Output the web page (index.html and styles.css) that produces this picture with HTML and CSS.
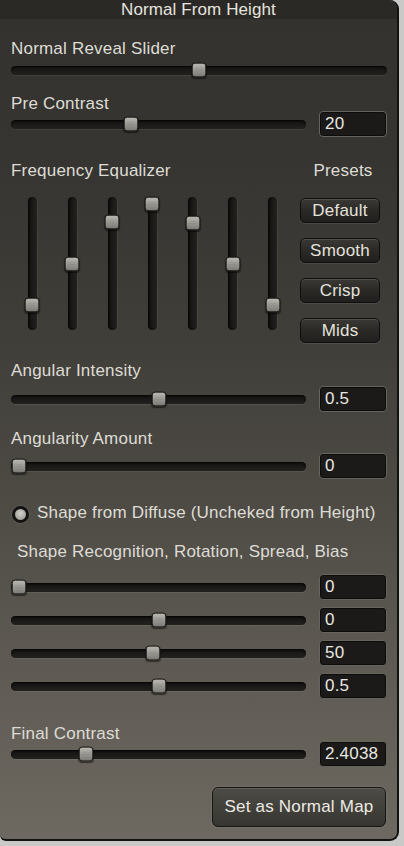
FILE: index.html
```html
<!DOCTYPE html>
<html>
<head>
<meta charset="utf-8">
<link rel="stylesheet" href="styles.css">
</head>
<body>
<div class="panel">
  <div class="title">Normal From Height</div>
  <div class="content">
    <div class="label l1">Normal Reveal Slider</div>
    <div class="row r1">
      <div class="track"><div class="rail"><span class="thumb" style="left:50%"></span></div></div>
    </div>

    <div class="label l2">Pre Contrast</div>
    <div class="row">
      <div class="track"><div class="rail"><span class="thumb" style="left:40%"></span></div></div>
      <div class="value">20</div>
    </div>

    <div class="eq-head"><span class="label">Frequency Equalizer</span><span class="label presets-title">Presets</span></div>
    <div class="eq">
      <div class="bands">
        <div class="band"><div class="vtrack"><div class="vrail"><span class="vthumb" style="top:85%"></span></div></div></div>
        <div class="band"><div class="vtrack"><div class="vrail"><span class="vthumb" style="top:50%"></span></div></div></div>
        <div class="band"><div class="vtrack"><div class="vrail"><span class="vthumb" style="top:15%"></span></div></div></div>
        <div class="band"><div class="vtrack"><div class="vrail"><span class="vthumb" style="top:0%"></span></div></div></div>
        <div class="band"><div class="vtrack"><div class="vrail"><span class="vthumb" style="top:16%"></span></div></div></div>
        <div class="band"><div class="vtrack"><div class="vrail"><span class="vthumb" style="top:50%"></span></div></div></div>
        <div class="band"><div class="vtrack"><div class="vrail"><span class="vthumb" style="top:85%"></span></div></div></div>
      </div>
      <div class="presets">
        <div class="preset">Default</div>
        <div class="preset">Smooth</div>
        <div class="preset">Crisp</div>
        <div class="preset">Mids</div>
      </div>
    </div>

    <div class="label l4">Angular Intensity</div>
    <div class="row r4">
      <div class="track"><div class="rail"><span class="thumb" style="left:50%"></span></div></div>
      <div class="value">0.5</div>
    </div>

    <div class="label l5">Angularity Amount</div>
    <div class="row r5">
      <div class="track"><div class="rail"><span class="thumb" style="left:0%"></span></div></div>
      <div class="value">0</div>
    </div>

    <div class="radio-row">
      <span class="radio"></span>
      <span class="label">Shape from Diffuse (Uncheked from Height)</span>
    </div>

    <div class="label l6">Shape Recognition, Rotation, Spread, Bias</div>
    <div class="row r6">
      <div class="track"><div class="rail"><span class="thumb" style="left:0%"></span></div></div>
      <div class="value">0</div>
    </div>
    <div class="row r7">
      <div class="track"><div class="rail"><span class="thumb" style="left:50%"></span></div></div>
      <div class="value">0</div>
    </div>
    <div class="row r7">
      <div class="track"><div class="rail"><span class="thumb" style="left:48%"></span></div></div>
      <div class="value">50</div>
    </div>
    <div class="row r7">
      <div class="track"><div class="rail"><span class="thumb" style="left:50%"></span></div></div>
      <div class="value">0.5</div>
    </div>

    <div class="label l7">Final Contrast</div>
    <div class="row">
      <div class="track"><div class="rail"><span class="thumb" style="left:24%"></span></div></div>
      <div class="value">2.4038</div>
    </div>

    <div class="action-row"><div class="action">Set as Normal Map</div></div>
  </div>
</div>
</body>
</html>
```
FILE: styles.css
```css
html, body {
  margin: 0;
  padding: 0;
  background: #c9c9c7;
}
body {
  width: 404px;
  height: 846px;
  overflow: hidden;
  font-family: "Liberation Sans", Arial, sans-serif;
}
.panel {
  width: 397px;
  height: 839px;
  border-right: 2px solid #121210;
  border-bottom: 2px solid #121210;
  border-radius: 0 9px 9px 6px;
  background: linear-gradient(#33322e 0%, #363531 20%, #403e39 40%, #4e4b45 60%, #5f5b54 80%, #6d6860 100%);
  overflow: hidden;
}
.title {
  height: 19px;
  line-height: 19px;
  font-size: 17px;
  text-align: center;
  color: #e6e4de;
  background: #2a2926;
  letter-spacing: 0.1px;
}
.content {
  padding: 0 10px 0 11px;
  display: flex;
  flex-direction: column;
}
.label {
  font-size: 17px;
  line-height: 16px;
  height: 16px;
  color: #dedcd5;
  letter-spacing: 0.2px;
  white-space: nowrap;
}
.l1 { margin-top: 22px; }
.r1 { margin-top: 1px; }
.l2 { margin-top: 14px; }
.l4 { margin-top: 20px; }
.r4 { margin-top: 8px; }
.l5 { margin-top: 20px; }
.r5 { margin-top: 7px; }
.l6 { margin-top: 23px; padding-left: 6px; }
.r6 { margin-top: 15px; }
.r7 { margin-top: 9px; }
.l7 { margin-top: 28px; }

.row {
  display: flex;
  align-items: center;
  height: 24px;
}
.track {
  flex: 1;
  height: 9px;
  position: relative;
  border-radius: 5px;
  background: linear-gradient(#121110, #23221f);
  box-shadow: inset 0 1px 2px rgba(0,0,0,0.8), 0 1px 0 rgba(255,255,255,0.07);
}
.rail {
  position: absolute;
  left: 7.5px;
  right: 7.5px;
  top: 0;
  bottom: 0;
}
.thumb, .vthumb {
  position: absolute;
  width: 13px;
  height: 13px;
  border: 1px solid #1c1b19;
  border-radius: 4px;
  background: linear-gradient(#b9b9b2 0%, #9c9b95 45%, #7b7a74 100%);
  box-shadow: 0 1px 1px rgba(0,0,0,0.5);
}
.thumb {
  top: 50%;
  transform: translate(-50%, -50%);
}
.thumb::after, .vthumb::after {
  content: "";
  position: absolute;
  left: 3px;
  right: 3px;
  top: 5px;
  height: 3px;
  background: repeating-linear-gradient(#8a8983 0 1px, transparent 1px 2px);
  opacity: 0.7;
}
.value {
  width: 68px;
  height: 26px;
  flex: none;
  box-sizing: border-box;
  margin-left: 13px;
  border: 1px solid #66645d;
  border-radius: 4px;
  background: #1b1a18;
  box-shadow: inset 0 0 0 1px #0c0c0b;
  color: #e8e6e0;
  font-size: 17px;
  line-height: 24px;
  padding-left: 5px;
  letter-spacing: 0.2px;
}

.eq-head {
  margin-top: 27px;
  display: flex;
  justify-content: space-between;
}
.presets-title {
  width: 80px;
  text-align: center;
  margin-right: 4px;
}
.eq {
  margin-top: 18px;
  height: 146px;
  display: flex;
}
.bands {
  display: flex;
  margin-left: 1px;
  width: 281px;
}
.band {
  width: 40.2px;
  display: flex;
  justify-content: center;
}
.vtrack {
  width: 9px;
  height: 133px;
  position: relative;
  border-radius: 5px;
  background: linear-gradient(90deg, #121110, #23221f);
  box-shadow: inset 1px 0 2px rgba(0,0,0,0.8), 1px 0 0 rgba(255,255,255,0.06);
}
.vrail {
  position: absolute;
  top: 7px;
  bottom: 7px;
  left: 0;
  right: 0;
}
.vthumb {
  left: 50%;
  transform: translate(-50%, -50%);
}
.presets {
  margin-left: 7px;
  margin-top: 1px;
  display: flex;
  flex-direction: column;
  gap: 15px;
}
.preset {
  width: 80px;
  height: 25px;
  box-sizing: border-box;
  border: 1px solid #0e0e0d;
  border-radius: 5px;
  background: linear-gradient(#3a3935 0%, #2a2926 50%, #201f1d 100%);
  box-shadow: inset 0 1px 0 rgba(255,255,255,0.12), 0 1px 0 rgba(255,255,255,0.08);
  color: #e4e2dc;
  font-size: 17px;
  line-height: 23px;
  text-align: center;
  letter-spacing: 0.2px;
}

.radio-row {
  margin-top: 27px;
  display: flex;
  align-items: center;
  height: 16px;
}
.radio {
  width: 11px;
  height: 11px;
  flex: none;
  margin: 2px 0 0 1px;
  border: 3px solid #141312;
  border-radius: 50%;
  background: radial-gradient(circle at 50% 40%, #d2d1cb 0%, #aeada7 55%, #7a7974 100%);
  box-shadow: 0 0 0 1px rgba(255,255,255,0.08);
}
.radio-row .label {
  margin-left: 8px;
}

.action-row {
  margin-top: 21px;
  display: flex;
  justify-content: flex-end;
  padding-right: 1px;
}
.action {
  width: 174px;
  height: 40px;
  box-sizing: border-box;
  border: 1px solid #151513;
  border-radius: 6px;
  background: linear-gradient(#4d4b46 0%, #42403b 50%, #383632 100%);
  box-shadow: inset 0 1px 0 rgba(255,255,255,0.12), 0 0 0 1px rgba(255,255,255,0.06);
  color: #eceae4;
  font-size: 17px;
  line-height: 38px;
  text-align: center;
  letter-spacing: 0.2px;
}
```
